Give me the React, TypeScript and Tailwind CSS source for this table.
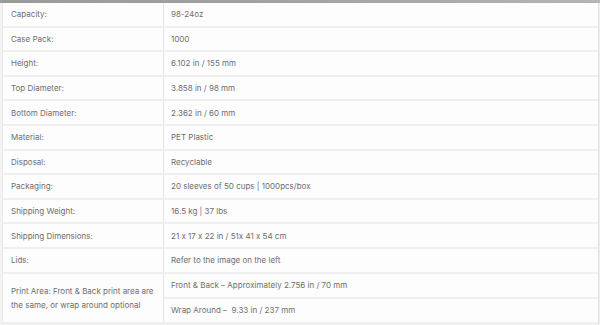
import React from 'react'

const specs = [
  { label: 'Capacity:', value: '98-24oz' },
  { label: 'Case Pack:', value: '1000' },
  { label: 'Height:', value: '6.102 in / 155 mm' },
  { label: 'Top Diameter:', value: '3.858 in / 98 mm' },
  { label: 'Bottom Diameter:', value: '2.362 in / 60 mm' },
  { label: 'Material:', value: 'PET Plastic' },
  { label: 'Disposal:', value: 'Recyclable' },
  { label: 'Packaging:', value: '20 sleeves of 50 cups | 1000pcs/box' },
  { label: 'Shipping Weight:', value: '16.5 kg | 37 lbs' },
  { label: 'Shipping Dimensions:', value: '21 x 17 x 22 in / 51x 41 x 54 cm' },
  { label: 'Lids:', value: 'Refer to the image on the left' },
]

export default function App() {
  return (
    <div className="w-[600px] h-[325px] overflow-hidden bg-[#f3f3f3] font-['Inter','Liberation_Sans',sans-serif] [font-feature-settings:'calt'_0] text-[8px] text-[#6e6e6e]">
      {/* top edge */}
      <div className="h-[3px] bg-gradient-to-r from-[#9a9a9a] via-[#a3a3a3] to-[#b5b5b5]" />

      <div className="mx-[2px] bg-[#fdfdfd] border-l border-[#e9e9e9] shadow-[1px_0_1px_rgba(0,0,0,0.08)]">
        {specs.map((row, index) => (
          <div key={index} className="flex h-[24.6px] border-b-2 border-[#efefef]">
            <div className="w-[161px] shrink-0 flex items-center pl-[8px] border-r border-[#e6e6e6]">
              {row.label}
            </div>
            <div className="flex-1 flex items-center pl-[7px]">{row.value}</div>
          </div>
        ))}

        {/* Print area: two sub rows on the right */}
        <div className="flex h-[50px] border-b-2 border-[#efefef]">
          <div className="w-[161px] shrink-0 flex items-center pl-[8px] pr-2 leading-[14px] border-r border-[#e6e6e6]">
            Print Area: Front &amp; Back print area are the same, or wrap around optional
          </div>
          <div className="flex-1 flex flex-col">
            <div className="h-[25px] flex items-center pl-[7px] border-b-2 border-[#efefef]">
              Front &amp; Back – Approximately 2.756 in / 70 mm
            </div>
            <div className="flex-1 flex items-center pl-[7px]">
              Wrap Around –&nbsp; 9.33 in / 237 mm
            </div>
          </div>
        </div>
      </div>
    </div>
  )
}
